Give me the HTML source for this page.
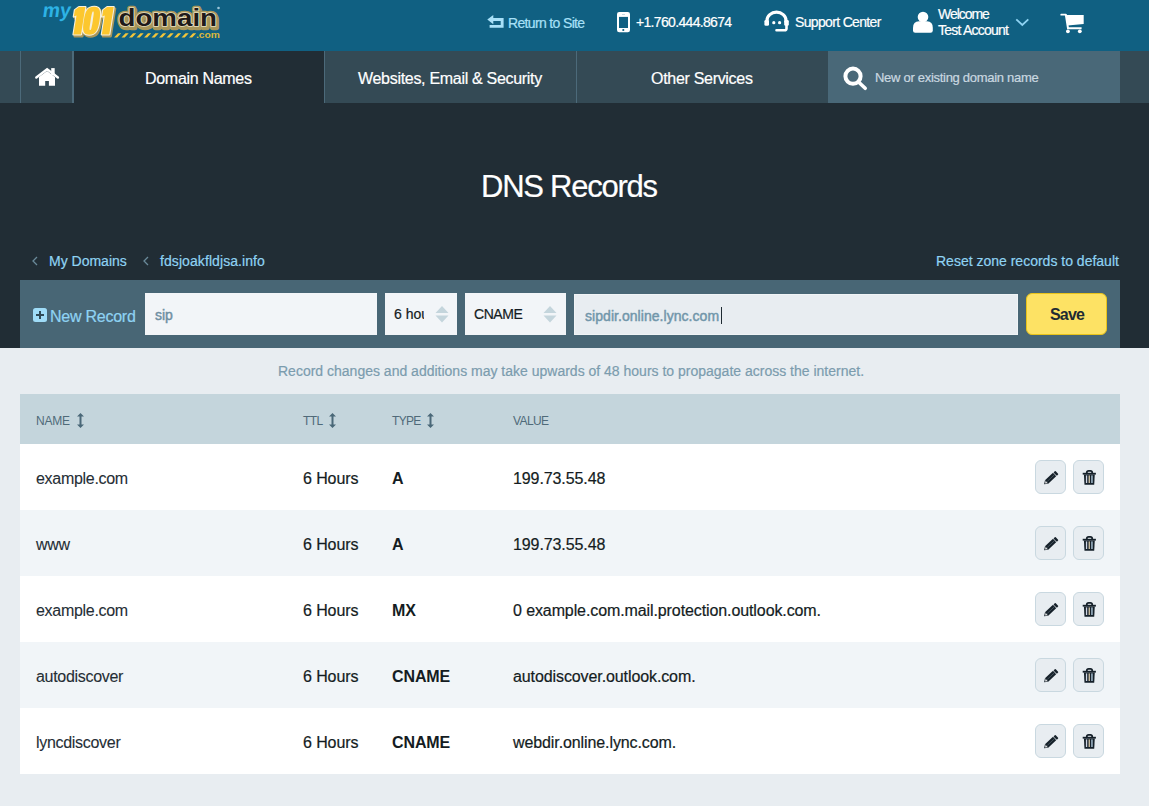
<!DOCTYPE html>
<html><head><meta charset="utf-8">
<style>
*{margin:0;padding:0;box-sizing:border-box}
html,body{width:1149px;height:806px;overflow:hidden;background:#e8edf1;font-family:"Liberation Sans",sans-serif}
.a{position:absolute;white-space:nowrap;line-height:1;-webkit-text-stroke:0.2px currentColor}
svg{position:absolute;overflow:visible}
#top{position:absolute;left:0;top:0;width:1149px;height:51px;background:#106082}
#nav{position:absolute;left:0;top:51px;width:1149px;height:52px;background:#344a55}
#hero{position:absolute;left:0;top:103px;width:1149px;height:245px;background:#212d35}
.sep{position:absolute;top:0;width:1px;height:52px;background:#4c6a7a}
.tab{position:absolute;top:0;height:52px}
.navt{color:#fff;font-size:16px;letter-spacing:-0.3px}
.hdr{color:#fff;font-size:14px}
#bar{position:absolute;left:20px;top:280px;width:1100px;height:68px;background:#486675}
.inp{position:absolute;top:13px;height:42px;background:#f2f5f8}
#tbl{position:absolute;left:20px;top:394px;width:1100px}
.th{height:50px;background:#c4d5dc;position:relative}
.row{height:66px;position:relative;background:#fff}
.row.e{background:#f1f5f8}
.c{-webkit-text-stroke:0.2px currentColor;position:absolute;font-size:16px;color:#141c22;line-height:1;white-space:nowrap;top:27px;letter-spacing:-0.1px}
.n{top:27px;letter-spacing:-0.3px;color:#252e35;-webkit-text-stroke:0.1px currentColor}
.b{font-weight:bold;-webkit-text-stroke:0}
.h{position:absolute;font-size:12px;color:#4f6a79;line-height:1;white-space:nowrap;top:21px}
.btn{position:absolute;top:16px;width:31px;height:34px;border:1px solid #c9d8e0;border-radius:6px;background:#e8edf1}
</style></head><body>
<div id="top">
  <svg style="left:0;top:0" width="240" height="51">
    <text x="42" y="17" font-family="Liberation Sans" font-weight="bold" font-size="20" fill="#2db3e6" textLength="28" lengthAdjust="spacingAndGlyphs" transform="translate(0 17) skewX(-8) translate(0 -17)">my</text>
    <defs><path id="d101" d="M74.5 7H81V34.5H73.5V15.5L71 16.5V10Z M89.8 6.8C95.5 6.8 97.3 10.5 97.3 20.7C97.3 31 95.5 34.7 89.3 34.7C83.2 34.7 81.6 31 81.6 20.7C81.6 10.5 83.2 6.8 89.8 6.8Z M89.5 11.5C88.6 11.5 88.4 13 88.4 20.7C88.4 28.5 88.6 30 89.5 30C90.4 30 90.6 28.5 90.6 20.7C90.6 13 90.4 11.5 89.5 11.5Z M102.8 7H109.3V34.5H101.8V15.5L99.3 16.5V10Z"/></defs>
    <g transform="translate(0 34.5) skewX(-9) translate(0 -34.5)">
      <use href="#d101" transform="translate(1.6 1.8)" fill="#a8965a" stroke="#a8965a" stroke-width="2.6" stroke-linejoin="round" fill-rule="evenodd"/>
      <use href="#d101" fill="#f6f0dc" stroke="#f6f0dc" stroke-width="2.2" stroke-linejoin="round" fill-rule="evenodd"/>
      <use href="#d101" fill="#fcc72e" fill-rule="evenodd"/>
    </g>
    <g font-family="Liberation Sans" font-weight="bold" font-size="24">
      <text x="119.5" y="27.5" fill="#a8965a" stroke="#a8965a" stroke-width="4.5" stroke-linejoin="round" textLength="98.5" lengthAdjust="spacingAndGlyphs">domain</text>
      <text x="118.5" y="25.8" fill="#a8965a" stroke="#a8965a" stroke-width="4.5" stroke-linejoin="round" textLength="98.5" lengthAdjust="spacingAndGlyphs">domain</text>
      <text x="118.5" y="25.8" fill="#1e1a1a" stroke="#e8e0c0" stroke-width="1.6" stroke-linejoin="round" textLength="98.5" lengthAdjust="spacingAndGlyphs" paint-order="stroke">domain</text>
    </g>
    <g fill="#f2c53a">
      <path d="M114 37.5l4-4.3h3.2l-4 4.3z M121.5 37.5l4-4.3h3.2l-4 4.3z M129 37.5l4-4.3h3.2l-4 4.3z M136.5 37.5l4-4.3h3.2l-4 4.3z M144 37.5l4-4.3h3.2l-4 4.3z M151.5 37.5l4-4.3h3.2l-4 4.3z M159 37.5l4-4.3h3.2l-4 4.3z M166.5 37.5l4-4.3h3.2l-4 4.3z M174 37.5l4-4.3h3.2l-4 4.3z M181.5 37.5l4-4.3h3.2l-4 4.3z M189 37.5l4-4.3h3.2l-4 4.3z"/>
    </g>
    <text x="196" y="37.8" font-family="Liberation Sans" font-size="9.5" font-weight="bold" fill="#dcb83c" textLength="24" lengthAdjust="spacingAndGlyphs">.com</text>
    <circle cx="218.5" cy="8" r="1.3" fill="#9cc4d8"/>
  </svg>

  <!-- return icon -->
  <svg style="left:487px;top:15px" width="17" height="13" viewBox="0 0 17 13">
    <path d="M0.3 4.6L6.3 0V3.1H16.6V12.8H2.6V10H13.7V5.9H6.3V9.3Z" fill="#a8e0f8"/>
  </svg>
  <div class="a hdr" style="left:508px;top:16px;color:#a8e0f8;letter-spacing:-0.65px">Return to Site</div>
  <!-- phone -->
  <svg style="left:617px;top:12px" width="13" height="21" viewBox="0 0 13 21">
    <rect x="0" y="0" width="13" height="20.3" rx="2.2" fill="#fff"/>
    <rect x="2" y="4.9" width="9" height="11.1" fill="#106082"/>
    <circle cx="6.3" cy="18" r="1.1" fill="#106082"/>
    <rect x="5" y="2.2" width="3" height="0.8" fill="#b8d0dc"/>
  </svg>
  <div class="a hdr" style="left:636px;top:15px;letter-spacing:-0.67px">+1.760.444.8674</div>
  <!-- headset -->
  <svg style="left:763px;top:10px" width="27" height="23" viewBox="763 10 27 23">
    <path d="M767 22.5V20.5A9.5 8.3 0 0 1 786 20.5V22.5" fill="none" stroke="#fff" stroke-width="3.2"/>
    <rect x="764.4" y="19.9" width="4.6" height="5.9" rx="1.4" fill="#fff"/>
    <rect x="784.2" y="19.9" width="4.6" height="5.9" rx="1.4" fill="#fff"/>
    <circle cx="773.8" cy="22.7" r="1.6" fill="#fff"/>
    <circle cx="779.6" cy="22.7" r="1.6" fill="#fff"/>
    <path d="M786.5 25V28.5Q786.5 30.3 784.5 30.3H776.5" fill="none" stroke="#fff" stroke-width="2.6" stroke-linecap="round"/>
  </svg>
  <div class="a hdr" style="left:795px;top:15px;letter-spacing:-0.66px">Support Center</div>
  <!-- user -->
  <svg style="left:913px;top:11px" width="20" height="22" viewBox="913 11 20 22">
    <circle cx="923" cy="17" r="5.3" fill="#fff"/>
    <path d="M913 30.6V28Q913 21.3 919 21.3H927Q932.8 21.3 932.8 28V30.6Q932.8 32.8 930.6 32.8H915.2Q913 32.8 913 30.6Z" fill="#fff"/>
  </svg>
  <div class="a hdr" style="left:938px;top:7px;letter-spacing:-1.05px">Welcome</div>
  <div class="a hdr" style="left:938px;top:23px;letter-spacing:-0.77px">Test Account</div>
  <svg style="left:1015px;top:18px" width="15" height="9" viewBox="1015 18 15 9">
    <path d="M1016.3 19.3L1022.3 25L1028.3 19.3" fill="none" stroke="#8fd3f3" stroke-width="1.8"/>
  </svg>
  <!-- cart -->
  <svg style="left:1060px;top:13px" width="25" height="21" viewBox="1060 13 25 21">
    <path d="M1061.2 14.7H1065.8" stroke="#fff" stroke-width="1.7" stroke-linecap="round"/>
    <path d="M1065.5 14.9H1083.7V24L1067.6 25.5Z" fill="#fff"/>
    <path d="M1065.8 14.5L1068 28.2H1081.6" fill="none" stroke="#fff" stroke-width="2"/>
    <circle cx="1067.9" cy="31.3" r="1.9" fill="#fff"/>
    <circle cx="1079.8" cy="31.3" r="1.9" fill="#fff"/>
  </svg>
</div>
<div id="nav">
  <div class="sep" style="left:20px"></div>
  <div class="sep" style="left:72px;width:2px"></div>
  <div class="tab" style="left:74px;width:250px;background:#212d35"></div>
  <div class="sep" style="left:324px"></div>
  <div class="sep" style="left:576px"></div>
  <div class="tab" style="left:828px;width:292px;background:#496878"></div>
  <!-- home -->
  <svg style="left:35px;top:17px" width="24" height="18" viewBox="35 68 24 18">
    <rect x="51.2" y="68.1" width="3.5" height="7" fill="#fff"/>
    <path d="M36.3 77.5L47.1 69.2L57.9 77.5" fill="none" stroke="#fff" stroke-width="2.4" stroke-linecap="round"/>
    <path d="M39 85.8V77L47.1 71L55 77V85.8H48.9V81H45.2V85.8Z" fill="#fff"/>
  </svg>
  <div class="a navt" style="left:145px;top:20px">Domain Names</div>
  <div class="a navt" style="left:358px;top:20px">Websites, Email &amp; Security</div>
  <div class="a navt" style="left:651px;top:20px">Other Services</div>
  <!-- search -->
  <svg style="left:842px;top:15px" width="26" height="25" viewBox="842 66 26 25">
    <circle cx="853" cy="76.2" r="7.6" fill="none" stroke="#fff" stroke-width="4"/>
    <path d="M858.5 82L865.2 88.3" stroke="#fff" stroke-width="3.6" stroke-linecap="round"/>
  </svg>
  <div class="a" style="left:875px;top:20px;font-size:13px;color:#c9d8e0;letter-spacing:-0.29px">New or existing domain name</div>
</div>
<div id="hero">
  <div class="a" style="left:481px;top:68px;font-size:31px;color:#fff;letter-spacing:-1.25px">DNS Records</div>
  <svg style="left:31px;top:152px" width="8" height="12" viewBox="0 0 8 12"><path d="M6 2L2 6L6 10" fill="none" stroke="#6a8a9a" stroke-width="1.3"/></svg>
  <div class="a" style="left:49px;top:151px;font-size:14px;color:#8fd3f3">My Domains</div>
  <svg style="left:142px;top:152px" width="8" height="12" viewBox="0 0 8 12"><path d="M6 2L2 6L6 10" fill="none" stroke="#6a8a9a" stroke-width="1.3"/></svg>
  <div class="a" style="left:160px;top:151px;font-size:14px;color:#8fd3f3;letter-spacing:0.08px">fdsjoakfldjsa.info</div>
  <div class="a" style="left:936px;top:151px;font-size:14px;color:#8fd3f3">Reset zone records to default</div>
</div>
<div id="bar">
  <svg style="left:13px;top:28px" width="14" height="14" viewBox="0 0 14 14">
    <rect width="14" height="14" rx="2.5" fill="#9fdcf7"/>
    <path d="M7 3V11M3 7H11" stroke="#2f4a57" stroke-width="2"/>
  </svg>
  <div class="a" style="left:30px;top:29px;font-size:16px;color:#8fd3f3;letter-spacing:-0.25px">New Record</div>
  <div class="inp" style="left:125px;width:232px"><div class="a" style="left:10px;top:15px;font-size:14px;color:#6f8fa2;-webkit-text-stroke:0.45px #6f8fa2">sip</div></div>
  <div class="inp" style="left:365px;width:72px;overflow:hidden"><div class="a" style="left:9px;top:14px;font-size:14px;color:#141c22">6 hou</div>
    <div style="position:absolute;left:38.5px;top:0;width:30px;height:42px;background:#f2f5f8"></div>
    <svg style="left:50px;top:13px" width="14" height="17" viewBox="0 0 14 17"><path d="M0.5 7H13.5L7 0Z M0.5 9.5H13.5L7 16.5Z" fill="#c4d5dc"/></svg>
  </div>
  <div class="inp" style="left:445px;width:101px"><div class="a" style="left:9px;top:14px;font-size:14px;color:#141c22;letter-spacing:-0.46px">CNAME</div>
    <svg style="left:78px;top:13px" width="14" height="17" viewBox="0 0 14 17"><path d="M0.5 7H13.5L7 0Z M0.5 9.5H13.5L7 16.5Z" fill="#c4d5dc"/></svg>
  </div>
  <div class="inp" style="left:554px;top:14px;width:444px;height:41px;background:#e8edf1;border:1px solid #f0f4f6"><div class="a" style="left:10px;top:14px;font-size:14px;color:#7196aa;-webkit-text-stroke:0.45px #7196aa;letter-spacing:0.05px">sipdir.online.lync.com</div><div style="position:absolute;left:146px;top:12px;width:1px;height:17px;background:#1f2b33"></div></div>
  <div style="position:absolute;left:1006px;top:13px;width:81px;height:42px;background:#fde264;border:1px solid #e9c31a;border-radius:6px"><div class="a" style="left:23px;top:13px;font-size:16px;font-weight:bold;color:#1f2b33;letter-spacing:-0.8px;-webkit-text-stroke:0">Save</div></div>
</div>
<div class="a" style="left:278px;top:364px;font-size:14px;color:#7b9cae">Record changes and additions may take upwards of 48 hours to propagate across the internet.</div>
<div id="tbl">
  <div class="th">
    <div class="h" style="left:16px;letter-spacing:-0.2px">NAME</div>
    <svg style="left:57px;top:19px" width="7" height="15" viewBox="0 0 7 15"><path d="M3.5 0L7 3.5H4.5V11.5H7L3.5 15L0 11.5H2.5V3.5H0Z" fill="#4a6878"/></svg>
    <div class="h" style="left:283px;letter-spacing:-0.6px">TTL</div>
    <svg style="left:309px;top:19px" width="7" height="15" viewBox="0 0 7 15"><path d="M3.5 0L7 3.5H4.5V11.5H7L3.5 15L0 11.5H2.5V3.5H0Z" fill="#4a6878"/></svg>
    <div class="h" style="left:372px;letter-spacing:-0.7px">TYPE</div>
    <svg style="left:407px;top:19px" width="7" height="15" viewBox="0 0 7 15"><path d="M3.5 0L7 3.5H4.5V11.5H7L3.5 15L0 11.5H2.5V3.5H0Z" fill="#4a6878"/></svg>
    <div class="h" style="left:493px;letter-spacing:-0.6px">VALUE</div>
  </div>
  <div class="row"><div class="c n" style="left:16px">example.com</div><div class="c" style="left:283px">6 Hours</div><div class="c b" style="left:372px">A</div><div class="c" style="left:493px">199.73.55.48</div>
    <div class="btn" style="left:1015px"><svg style="left:0;top:0" width="31" height="34" viewBox="0 0 31 34"><g transform="translate(14.6 17.3) rotate(-43) scale(0.84)"><rect x="-6.5" y="-2.8" width="13" height="5.6" fill="#16212a"/><rect x="7.3" y="-2.8" width="3" height="5.6" rx="0.8" fill="#16212a"/><path d="M-6.5 -2.8L-10.6 0L-6.5 2.8Z" fill="#16212a"/><path d="M-6.5 -1.8L-9 0L-6.5 1.8Z" fill="#f4f4f4"/><path d="M-5.5 0H6" stroke="#5b6b74" stroke-width="0.7"/></g></svg></div><div class="btn" style="left:1053px"><svg style="left:0;top:0" width="31" height="34" viewBox="0 0 31 34"><path d="M12.8 12.3V11.6Q12.8 9.8 14.6 9.8H16.4Q18.2 9.8 18.2 11.6V12.3" fill="none" stroke="#16212a" stroke-width="1.8"/><rect x="8.7" y="11.8" width="13.2" height="1.8" fill="#16212a"/><path d="M9.9 13.5H20.8L20.2 23.8H10.5Z" fill="#16212a"/><rect x="11.9" y="14.4" width="1.3" height="7.6" fill="#cfd6e6"/><rect x="14.6" y="14.4" width="1.3" height="7.6" fill="#d8c9a8"/><rect x="17.3" y="14.4" width="1.3" height="7.6" fill="#b8d2e6"/></svg></div></div>
  <div class="row e"><div class="c n" style="left:16px">www</div><div class="c" style="left:283px">6 Hours</div><div class="c b" style="left:372px">A</div><div class="c" style="left:493px">199.73.55.48</div>
    <div class="btn" style="left:1015px"><svg style="left:0;top:0" width="31" height="34" viewBox="0 0 31 34"><g transform="translate(14.6 17.3) rotate(-43) scale(0.84)"><rect x="-6.5" y="-2.8" width="13" height="5.6" fill="#16212a"/><rect x="7.3" y="-2.8" width="3" height="5.6" rx="0.8" fill="#16212a"/><path d="M-6.5 -2.8L-10.6 0L-6.5 2.8Z" fill="#16212a"/><path d="M-6.5 -1.8L-9 0L-6.5 1.8Z" fill="#f4f4f4"/><path d="M-5.5 0H6" stroke="#5b6b74" stroke-width="0.7"/></g></svg></div><div class="btn" style="left:1053px"><svg style="left:0;top:0" width="31" height="34" viewBox="0 0 31 34"><path d="M12.8 12.3V11.6Q12.8 9.8 14.6 9.8H16.4Q18.2 9.8 18.2 11.6V12.3" fill="none" stroke="#16212a" stroke-width="1.8"/><rect x="8.7" y="11.8" width="13.2" height="1.8" fill="#16212a"/><path d="M9.9 13.5H20.8L20.2 23.8H10.5Z" fill="#16212a"/><rect x="11.9" y="14.4" width="1.3" height="7.6" fill="#cfd6e6"/><rect x="14.6" y="14.4" width="1.3" height="7.6" fill="#d8c9a8"/><rect x="17.3" y="14.4" width="1.3" height="7.6" fill="#b8d2e6"/></svg></div></div>
  <div class="row"><div class="c n" style="left:16px">example.com</div><div class="c" style="left:283px">6 Hours</div><div class="c b" style="left:372px">MX</div><div class="c" style="left:493px">0 example.com.mail.protection.outlook.com.</div>
    <div class="btn" style="left:1015px"><svg style="left:0;top:0" width="31" height="34" viewBox="0 0 31 34"><g transform="translate(14.6 17.3) rotate(-43) scale(0.84)"><rect x="-6.5" y="-2.8" width="13" height="5.6" fill="#16212a"/><rect x="7.3" y="-2.8" width="3" height="5.6" rx="0.8" fill="#16212a"/><path d="M-6.5 -2.8L-10.6 0L-6.5 2.8Z" fill="#16212a"/><path d="M-6.5 -1.8L-9 0L-6.5 1.8Z" fill="#f4f4f4"/><path d="M-5.5 0H6" stroke="#5b6b74" stroke-width="0.7"/></g></svg></div><div class="btn" style="left:1053px"><svg style="left:0;top:0" width="31" height="34" viewBox="0 0 31 34"><path d="M12.8 12.3V11.6Q12.8 9.8 14.6 9.8H16.4Q18.2 9.8 18.2 11.6V12.3" fill="none" stroke="#16212a" stroke-width="1.8"/><rect x="8.7" y="11.8" width="13.2" height="1.8" fill="#16212a"/><path d="M9.9 13.5H20.8L20.2 23.8H10.5Z" fill="#16212a"/><rect x="11.9" y="14.4" width="1.3" height="7.6" fill="#cfd6e6"/><rect x="14.6" y="14.4" width="1.3" height="7.6" fill="#d8c9a8"/><rect x="17.3" y="14.4" width="1.3" height="7.6" fill="#b8d2e6"/></svg></div></div>
  <div class="row e"><div class="c n" style="left:16px">autodiscover</div><div class="c" style="left:283px">6 Hours</div><div class="c b" style="left:372px">CNAME</div><div class="c" style="left:493px">autodiscover.outlook.com.</div>
    <div class="btn" style="left:1015px"><svg style="left:0;top:0" width="31" height="34" viewBox="0 0 31 34"><g transform="translate(14.6 17.3) rotate(-43) scale(0.84)"><rect x="-6.5" y="-2.8" width="13" height="5.6" fill="#16212a"/><rect x="7.3" y="-2.8" width="3" height="5.6" rx="0.8" fill="#16212a"/><path d="M-6.5 -2.8L-10.6 0L-6.5 2.8Z" fill="#16212a"/><path d="M-6.5 -1.8L-9 0L-6.5 1.8Z" fill="#f4f4f4"/><path d="M-5.5 0H6" stroke="#5b6b74" stroke-width="0.7"/></g></svg></div><div class="btn" style="left:1053px"><svg style="left:0;top:0" width="31" height="34" viewBox="0 0 31 34"><path d="M12.8 12.3V11.6Q12.8 9.8 14.6 9.8H16.4Q18.2 9.8 18.2 11.6V12.3" fill="none" stroke="#16212a" stroke-width="1.8"/><rect x="8.7" y="11.8" width="13.2" height="1.8" fill="#16212a"/><path d="M9.9 13.5H20.8L20.2 23.8H10.5Z" fill="#16212a"/><rect x="11.9" y="14.4" width="1.3" height="7.6" fill="#cfd6e6"/><rect x="14.6" y="14.4" width="1.3" height="7.6" fill="#d8c9a8"/><rect x="17.3" y="14.4" width="1.3" height="7.6" fill="#b8d2e6"/></svg></div></div>
  <div class="row"><div class="c n" style="left:16px">lyncdiscover</div><div class="c" style="left:283px">6 Hours</div><div class="c b" style="left:372px">CNAME</div><div class="c" style="left:493px">webdir.online.lync.com.</div>
    <div class="btn" style="left:1015px"><svg style="left:0;top:0" width="31" height="34" viewBox="0 0 31 34"><g transform="translate(14.6 17.3) rotate(-43) scale(0.84)"><rect x="-6.5" y="-2.8" width="13" height="5.6" fill="#16212a"/><rect x="7.3" y="-2.8" width="3" height="5.6" rx="0.8" fill="#16212a"/><path d="M-6.5 -2.8L-10.6 0L-6.5 2.8Z" fill="#16212a"/><path d="M-6.5 -1.8L-9 0L-6.5 1.8Z" fill="#f4f4f4"/><path d="M-5.5 0H6" stroke="#5b6b74" stroke-width="0.7"/></g></svg></div><div class="btn" style="left:1053px"><svg style="left:0;top:0" width="31" height="34" viewBox="0 0 31 34"><path d="M12.8 12.3V11.6Q12.8 9.8 14.6 9.8H16.4Q18.2 9.8 18.2 11.6V12.3" fill="none" stroke="#16212a" stroke-width="1.8"/><rect x="8.7" y="11.8" width="13.2" height="1.8" fill="#16212a"/><path d="M9.9 13.5H20.8L20.2 23.8H10.5Z" fill="#16212a"/><rect x="11.9" y="14.4" width="1.3" height="7.6" fill="#cfd6e6"/><rect x="14.6" y="14.4" width="1.3" height="7.6" fill="#d8c9a8"/><rect x="17.3" y="14.4" width="1.3" height="7.6" fill="#b8d2e6"/></svg></div></div>
</div>
</body></html>
